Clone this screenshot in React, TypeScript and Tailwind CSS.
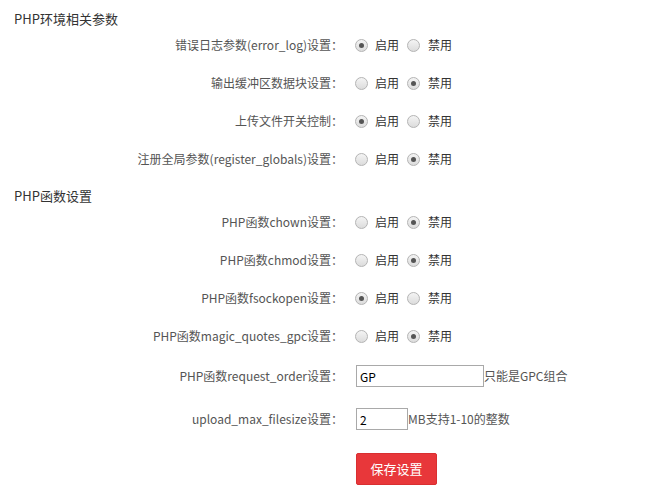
import React from "react";

const font = { fontFamily: '"Noto Sans CJK SC", "Liberation Sans", sans-serif' };

function Radio({ checked }: { checked: boolean }) {
  return (
    <span className="w-[13px] h-[13px] rounded-full border border-[#b4b4b4] bg-gradient-to-b from-[#f4f4f4] to-[#dcdcdc] flex items-center justify-center shrink-0">
      {checked && <span className="w-[5px] h-[5px] rounded-full bg-[#555]" />}
    </span>
  );
}

function Toggle({ on }: { on: boolean }) {
  return (
    <div className="-ml-[1px] flex items-center text-[12px] text-[#333]">
      <Radio checked={on} />
      <span className="ml-[7px]">启用</span>
      <span className="ml-[8px]">
        <Radio checked={!on} />
      </span>
      <span className="ml-[8px]">禁用</span>
    </div>
  );
}

function Row({ label, h = "h-[38px]", children }: { label: string; h?: string; children: React.ReactNode }) {
  return (
    <div className={`flex items-center ${h}`}>
      <div className="w-[345px] pr-[2px] text-right text-[12px] text-[#555] whitespace-nowrap">{label}</div>
      <div className="ml-[11px] flex items-center">{children}</div>
    </div>
  );
}

export default function App() {
  const env: [string, boolean][] = [
    ["错误日志参数(error_log)设置：", true],
    ["输出缓冲区数据块设置：", false],
    ["上传文件开关控制：", true],
    ["注册全局参数(register_globals)设置：", false],
  ];
  const fns: [string, boolean][] = [
    ["PHP函数chown设置：", false],
    ["PHP函数chmod设置：", false],
    ["PHP函数fsockopen设置：", true],
    ["PHP函数magic_quotes_gpc设置：", false],
  ];
  return (
    <div className="w-[663px] h-[495px] bg-white pt-[12px]" style={font}>
      <div className="h-[14px] flex items-center pl-[14px] text-[13px] text-[#333]">PHP环境相关参数</div>
      {env.map(([l, on]) => (
        <Row key={l} label={l}>
          <Toggle on={on} />
        </Row>
      ))}
      <div className="mt-[11px] h-[14px] flex items-center pl-[14px] text-[13px] text-[#333]">PHP函数设置</div>
      {fns.map(([l, on]) => (
        <Row key={l} label={l}>
          <Toggle on={on} />
        </Row>
      ))}
      <Row label="PHP函数request_order设置：" h="h-[42px]">
        <input
          defaultValue="GP"
          className="w-[128px] h-[22px] border border-[#a9a9a9] px-[3px] text-[12px] text-black outline-none"
          style={font}
        />
        <span className="text-[12px] text-[#555]">只能是GPC组合</span>
      </Row>
      <Row label="upload_max_filesize设置：" h="h-[44px]">
        <input
          defaultValue="2"
          className="w-[52px] h-[22px] border border-[#a9a9a9] px-[3px] text-[12px] text-black outline-none"
          style={font}
        />
        <span className="text-[12px] text-[#555]">MB支持1-10的整数</span>
      </Row>
      <div className="mt-[12px] pl-[356px]">
        <button className="w-[81px] h-[32px] bg-[#e8373a] border border-[#d92f31] rounded-[2px] text-white text-[13px]">
          保存设置
        </button>
      </div>
    </div>
  );
}
